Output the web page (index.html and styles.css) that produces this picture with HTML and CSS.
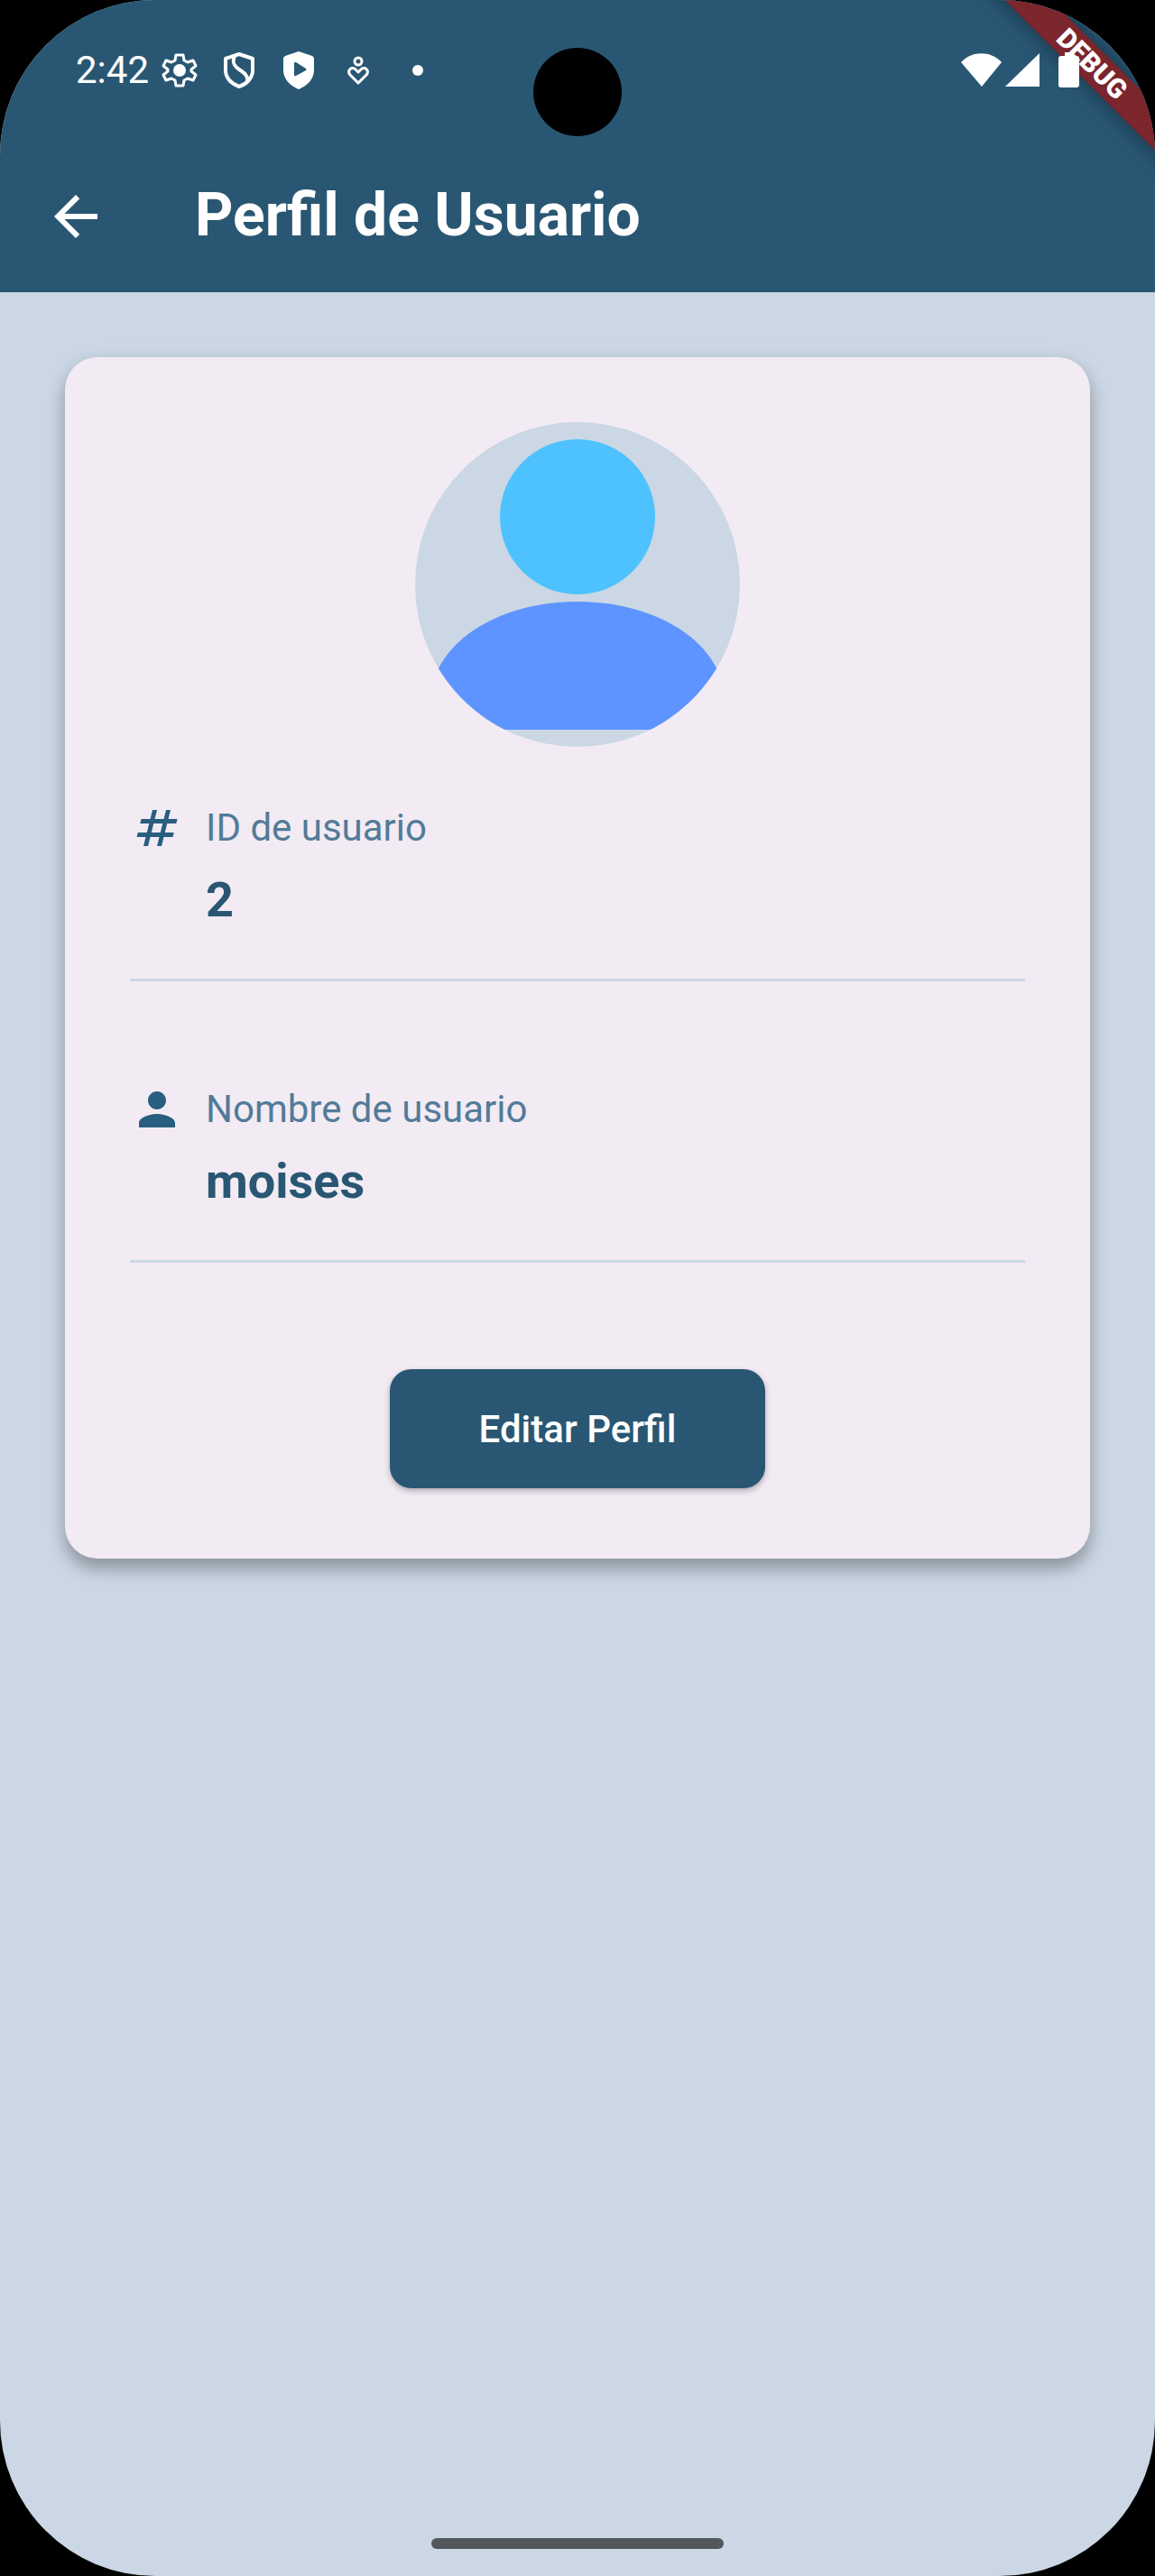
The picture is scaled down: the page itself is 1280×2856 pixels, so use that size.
FILE: index.html
```html
<!DOCTYPE html>
<html lang="es">
<head>
<meta charset="utf-8">
<meta name="viewport" content="width=device-width, initial-scale=1">
<title>Perfil de Usuario</title>
<link rel="stylesheet" href="styles.css">
</head>
<body>
<div class="screen">
  <header class="header">
    <div class="status">
      <time class="clock">2:42</time>
      <div class="status-icons">
        <svg class="icon-sm" viewBox="0 0 48 48" aria-hidden="true">
          <path class="line thin" d="M20 7h8l1 6 4 2 6-2 3 6-5 4v2l5 4-3 6-6-2-4 2-1 6h-8l-1-6-4-2-6 2-3-6 5-4v-2l-5-4 3-6 6 2 4-2z"/>
          <circle class="solid" cx="24" cy="24" r="7"/>
        </svg>
        <svg class="icon-sm" viewBox="0 0 48 48" aria-hidden="true">
          <path class="line" d="M24 6l15 5v13c0 8-6 15-15 18C15 39 9 32 9 24V11z"/>
          <path class="line" d="M19 8c-3 7-1 11 5 15s10 7 9 13"/>
        </svg>
        <svg class="icon-sm" viewBox="0 0 48 48" aria-hidden="true">
          <path class="solid" fill-rule="evenodd" d="M24 3l15 5q2 1 2 3v13c0 9-7 17-17 21C14 41 7 33 7 24V11q0-2 2-3zM20 15q-1 0-1 1v13q0 2 2 1l11-6q1-1 0-2l-11-7z"/>
        </svg>
        <svg class="icon-sm" viewBox="0 0 48 48" aria-hidden="true">
          <circle class="line thin" cx="24" cy="14" r="4"/>
          <path class="line thin" d="M24 38l-9-9c-4-5 2-10 6-6l3 3 3-3c4-4 10 1 6 6z"/>
        </svg>
        <svg class="icon-sm" viewBox="0 0 48 48" aria-hidden="true">
          <circle class="solid" cx="24" cy="24" r="6"/>
        </svg>
      </div>
      <svg class="signal-icons" viewBox="0 0 88 40" aria-hidden="true">
        <path class="solid" d="M0 11C12-2 33-2 45 11L23 38z"/>
        <path class="solid" d="M87 1v37H49z"/>
      </svg>
    </div>
    <div class="appbar">
      <button class="back" type="button" aria-label="Atrás">
        <svg viewBox="0 0 24 24" aria-hidden="true"><path class="solid" d="M20 11H7.83l5.59-5.59L12 4l-8 8 8 8 1.41-1.41L7.83 13H20v-2z"/></svg>
      </button>
      <h1 class="title">Perfil de Usuario</h1>
    </div>
  </header>

  <main class="content">
    <section class="card">
      <svg class="avatar" viewBox="0 0 360 360" role="img" aria-label="Foto de perfil">
        <defs><clipPath id="round"><circle cx="180" cy="180" r="180"/></clipPath></defs>
        <g clip-path="url(#round)">
          <rect width="360" height="360" fill="#cbd7e4"/>
          <circle cx="180" cy="105" r="86" fill="#4dc2ff"/>
          <path fill="#5e94ff" d="M17 341V311C17 245 92 199 180 199s163 46 163 112v30z"/>
        </g>
      </svg>
      <dl class="fields">
        <div class="field">
          <svg class="field-icon" viewBox="0 0 24 24" aria-hidden="true"><path d="M20 10V8h-4V4h-2v4h-4V4H8v4H4v2h4v4H4v2h4v4h2v-4h4v4h2v-4h4v-2h-4v-4h4zm-6 4h-4v-4h4v4z" transform="translate(3 0) skewX(-14)"/></svg>
          <dt class="label">ID de usuario</dt>
          <dd class="value">2</dd>
        </div>
        <div class="field">
          <svg class="field-icon" viewBox="0 0 24 24" aria-hidden="true"><path d="M12 12c2.21 0 4-1.79 4-4s-1.79-4-4-4-4 1.79-4 4 1.79 4 4 4zm0 2c-2.67 0-8 1.34-8 4v2h16v-2c0-2.66-5.33-4-8-4z"/></svg>
          <dt class="label">Nombre de usuario</dt>
          <dd class="value">moises</dd>
        </div>
      </dl>
      <button class="edit" type="button">Editar Perfil</button>
    </section>
  </main>

  <div class="camera"></div>
  <div class="banner">DEBUG</div>
  <svg class="battery" viewBox="0 0 24 40" aria-hidden="true"><path class="solid" d="M7 0h9v4h4q3 0 3 3v29q0 3-3 3H3q-3 0-3-3V7q0-3 3-3h4z"/></svg>
  <div class="home-bar"></div>
</div>
</body>
</html>
```

FILE: styles.css
```css
* { box-sizing: border-box; }

body {
  margin: 0;
  background: #000;
  font-family: Roboto, "Liberation Sans", sans-serif;
}

.screen {
  position: relative;
  display: flex;
  flex-direction: column;
  min-height: 100vh;
  overflow: hidden;
  border-radius: 172px;
  background: #cbd7e4;
}

.solid { fill: #fff; }
.line {
  fill: none;
  stroke: #fff;
  stroke-width: 4;
  stroke-linejoin: round;
  stroke-linecap: round;
}
.thin { stroke-width: 3; }

.header {
  background: #295773;
  color: #fff;
}

.status {
  display: flex;
  align-items: center;
  height: 156px;
  padding: 0 127px 0 84px;
}
.clock {
  font-size: 42px;
  line-height: 48px;
}
.status-icons {
  display: flex;
  flex: 1;
  gap: 18px;
  margin-left: 10px;
}
.icon-sm { width: 48px; height: 48px; }
.signal-icons { width: 88px; height: 40px; }

.appbar {
  display: flex;
  align-items: center;
  gap: 60px;
  height: 168px;
  padding: 0 48px;
}
.back {
  width: 108px;
  height: 72px;
  padding: 0;
  border: 0;
  background: none;
  text-align: left;
}
.back svg { width: 72px; height: 72px; }
.title {
  margin: 0;
  padding-bottom: 2px;
  font-size: 66px;
  font-weight: 700;
  line-height: 84px;
}

.content { padding: 72px; }
.card {
  display: flex;
  flex-direction: column;
  align-items: center;
  padding: 72px 72px 78px;
  border-radius: 36px;
  background: #f2ebf3;
  box-shadow: 0 12px 18px rgba(0, 0, 0, 0.26), 0 4px 24px rgba(0, 0, 0, 0.08);
}
.avatar { width: 360px; height: 360px; }

.fields {
  display: grid;
  gap: 112px;
  width: 100%;
  margin: 60px 0 118px;
}
.field {
  display: grid;
  grid-template-columns: 60px 1fr;
  gap: 12px 24px;
  padding-bottom: 49px;
  border-bottom: 3px solid #cbd7e4;
}
.field-icon {
  width: 60px;
  height: 60px;
  fill: #285e80;
}
.label {
  color: #527b99;
  font-size: 42px;
  line-height: 60px;
}
.value {
  grid-column: 2;
  margin: 0;
  color: #295773;
  font-size: 54px;
  font-weight: 700;
  line-height: 76px;
}

.edit {
  height: 132px;
  padding: 0 99px;
  border: 0;
  border-radius: 24px;
  background: #295773;
  color: #fff;
  font-family: inherit;
  font-size: 42px;
  font-weight: 500;
  box-shadow: 0 3px 6px rgba(60, 40, 60, 0.35);
}

/* Overlays above the app */
.camera {
  position: absolute;
  top: 53px;
  left: 50%;
  width: 98px;
  height: 98px;
  border-radius: 50%;
  background: #000;
  transform: translateX(-50%);
}
.banner {
  position: absolute;
  top: 53px;
  right: -90px;
  width: 320px;
  background: #7b252c;
  color: #fff;
  font-size: 30px;
  font-weight: 900;
  line-height: 36px;
  text-align: center;
  box-shadow: 0 0 24px rgba(0, 0, 0, 0.45);
  transform: rotate(45deg);
}
.battery {
  position: absolute;
  top: 58px;
  right: 83px;
  width: 24px;
  height: 40px;
}
.home-bar {
  position: absolute;
  bottom: 30px;
  left: 50%;
  width: 324px;
  height: 12px;
  border-radius: 6px;
  background: #52575b;
  transform: translateX(-50%);
}
```
